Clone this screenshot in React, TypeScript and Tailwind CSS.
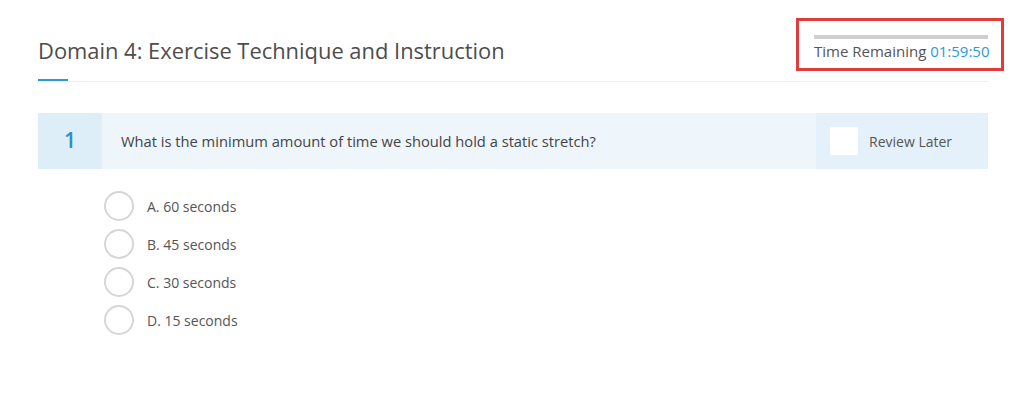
const options = ["A. 60 seconds", "B. 45 seconds", "C. 30 seconds", "D. 15 seconds"];

export default function App() {
  return (
    <div className="w-[1024px] h-[405px] bg-white overflow-hidden font-['Open_Sans',sans-serif]">
      <div className="ml-[38px] w-[950px]">
        <div className="flex items-start justify-between pt-[18px]">
          <h2 className="mt-[19px] text-[21.9px] leading-[28px] text-[#4d4d4d] font-normal">
            Domain 4: Exercise Technique and Instruction
          </h2>
          <div className="-mr-[16px] w-[208px] h-[53px] border-[3px] border-[#e03c3c] pl-[15px] pr-[13px] pt-[14px]">
            <div className="h-[4px] bg-[#cfcfcf]" />
            <div className="mt-[2px] text-[15px] leading-[20px] text-[#555] text-right whitespace-nowrap">
              Time Remaining <span className="text-[#2b9ad6]">01:59:50</span>
            </div>
          </div>
        </div>

        <div className="mt-[8px] border-b border-[#efefef]">
          <div className="w-[30px] h-[2px] bg-[#2b9ad6]" />
        </div>

        <div className="mt-[31px] h-[56px] flex bg-[#eef6fc]">
          <div className="w-[64px] flex items-center justify-center bg-[#ddeef9] text-[21px] font-semibold text-[#2b8fcf]">
            1
          </div>
          <div className="flex-1 flex items-center pl-[19px] text-[14.7px] text-[#444]">
            What is the minimum amount of time we should hold a static stretch?
          </div>
          <div className="w-[172px] flex items-center bg-[#e5f1fa]">
            <div className="ml-[14px] w-[28px] h-[28px] bg-white rounded-[2px]" />
            <span className="ml-[11px] text-[14px] text-[#555]">Review Later</span>
          </div>
        </div>

        <div className="mt-[22px] ml-[66px] flex flex-col gap-[8px]">
          {options.map((o) => (
            <div key={o} className="flex items-center h-[30px]">
              <div className="w-[30px] h-[30px] rounded-full border-2 border-[#d6d6d6] bg-white" />
              <span className="ml-[13px] text-[14px] text-[#555]">{o}</span>
            </div>
          ))}
        </div>
      </div>
    </div>
  );
}
